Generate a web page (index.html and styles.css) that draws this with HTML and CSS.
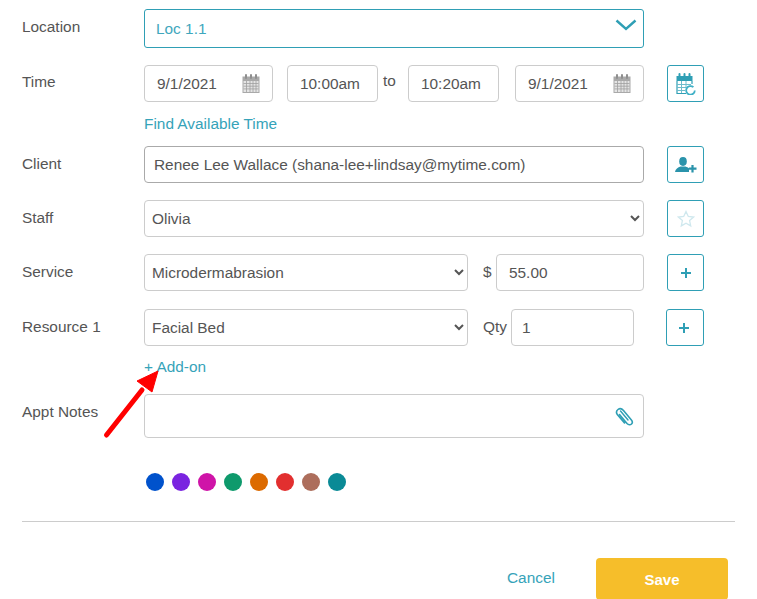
FILE: index.html
```html
<!DOCTYPE html>
<html lang="en">
<head>
<meta charset="utf-8">
<title>Appointment</title>
<link rel="stylesheet" href="styles.css">
</head>
<body>
<form class="form">
  <div class="row row-location">
    <label class="label">Location</label>
    <div class="location-box">
      <span>Loc 1.1</span>
      <svg class="loc-chevron" width="22" height="12" viewBox="0 0 22 12"><path d="M1.500 1.500 11 10l9.500-8.500" fill="none" stroke="#2f9fb5" stroke-width="2.400"/></svg>
    </div>
  </div>

  <div class="row row-time">
    <label class="label label-time">Time</label>
    <div class="field date">
      <span>9/1/2021</span>
      <svg class="cal" width="18" height="21" viewBox="0 0 18 20"><use href="#cal-grey"/></svg>
    </div>
    <div class="field time">10:00am</div>
    <span class="to">to</span>
    <div class="field time">10:20am</div>
    <div class="field date date-end">
      <span>9/1/2021</span>
      <svg class="cal" width="18" height="21" viewBox="0 0 18 20"><use href="#cal-grey"/></svg>
    </div>
    <button type="button" class="icon-btn btn-side">
      <svg width="20" height="22" viewBox="0 0 20 22">
        <path d="M.5 3h16v5H.5z" fill="#2f9fb5"/>
        <path d="M1 8v12.500h9M16 8v3" fill="none" stroke="#2f9fb5" stroke-width="1.200"/>
        <path d="M1 11.500h14M1 14.500h9M1 17.500h8M5.500 8v12M10 8v7" stroke="#6dbccc" stroke-width="1"/>
        <path d="M3.500 1v3.500M8.500 1v3.500M13.500 1v3.500" stroke="#2f9fb5" stroke-width="2" stroke-linecap="round"/>
        <path d="M18.800 17.500a4.300 4.300 0 1 1-1.400-3.300" fill="none" stroke="#3fb0c6" stroke-width="1.800"/>
      </svg>
    </button>
  </div>

  <div class="row-link link-find"><a class="link">Find Available Time</a></div>

  <div class="row row-client">
    <label class="label">Client</label>
    <div class="field client">Renee Lee Wallace (shana-lee+lindsay@mytime.com)</div>
    <button type="button" class="icon-btn btn-side">
      <svg width="22" height="16" viewBox="0 0 22 16">
        <ellipse cx="8" cy="4.500" rx="3.800" ry="4.400" fill="#2a93ab"/>
        <path d="M0 15c.3-3 3-4.500 5.500-5.500h5c1.500.5 2.500 1 3.500 1.800V15z" fill="#2a93ab"/>
        <path d="M17.500 8v7.500M14 11.700h7.500" stroke="#2a93ab" stroke-width="2.200"/>
      </svg>
    </button>
  </div>

  <div class="row row-staff">
    <label class="label">Staff</label>
    <select class="select select-wide"><option>Olivia</option></select>
    <button type="button" class="icon-btn btn-side">
      <svg width="18" height="18" viewBox="0 0 18 18"><path d="M9 1.500 11.300 6.500l5.200.6-3.900 3.500 1.100 5.300L9 13.200l-4.700 2.700 1.100-5.300L1.500 7.100l5.200-.6z" fill="#fff" stroke="#cfe8ee" stroke-width="1.300"/></svg>
    </button>
  </div>

  <div class="row row-service">
    <label class="label">Service</label>
    <select class="select select-half"><option>Microdermabrasion</option></select>
    <span class="unit unit-dollar">$</span>
    <div class="field price">55.00</div>
    <button type="button" class="icon-btn btn-side plus">
      <svg width="12" height="12" viewBox="0 0 12 12"><path d="M6 1v10M1 6h10" stroke="#2f9fb5" stroke-width="2"/></svg>
    </button>
  </div>

  <div class="row row-resource">
    <label class="label">Resource 1</label>
    <select class="select select-half"><option>Facial Bed</option></select>
    <span class="unit unit-qty">Qty</span>
    <div class="field qty">1</div>
    <button type="button" class="icon-btn btn-res plus">
      <svg width="12" height="12" viewBox="0 0 12 12"><path d="M6 1v10M1 6h10" stroke="#2f9fb5" stroke-width="2"/></svg>
    </button>
  </div>

  <div class="row-link link-addon"><a class="link">+ Add-on</a></div>

  <div class="row row-notes">
    <label class="label">Appt Notes</label>
    <div class="field notes">
      <svg width="20" height="21" viewBox="0 0 20 21"><path d="M5.500 7.500 13 16.500c1.500 1.700 3.500 1.500 4.500.5s1-2.800-.3-4.300L9.500 3.500C7.800 1.500 5.500 1.300 4 2.500S2 5.800 3.500 7.800l7 8.200" transform="translate(0 1)" fill="none" stroke="#2f9fb5" stroke-width="1.600" stroke-linecap="round"/><path d="M6.500 5l7.500 9" fill="none" stroke="#2f9fb5" stroke-width="1.400" stroke-linecap="round"/></svg>
    </div>
  </div>

  <div class="colors">
    <span class="dot c1"></span><span class="dot c2"></span><span class="dot c3"></span><span class="dot c4"></span><span class="dot c5"></span><span class="dot c6"></span><span class="dot c7"></span><span class="dot c8"></span>
  </div>

  <hr class="divider">

  <div class="actions">
    <a class="link cancel">Cancel</a>
    <button type="button" class="save">Save</button>
  </div>
</form>

<svg class="arrow" width="80" height="90" viewBox="0 0 80 90">
  <path d="M6.500 75 42 30" stroke="#ff0000" stroke-width="5" stroke-linecap="round" fill="none"/>
  <path d="M58 11 37 21 52 32z" fill="#ff0000" stroke="#ff0000" stroke-width="1" stroke-linejoin="round"/>
</svg>

<svg class="defs" width="0" height="0">
  <symbol id="cal-grey" viewBox="0 0 18 20">
    <path d="M.5 3h17v16.500H.5z" fill="#a9a9a9"/>
    <path d="M1.500 7.500h15v11h-15z" fill="#e4e4e4"/>
    <path d="M1.500 10h15M1.500 12.700h15M1.500 15.400h15M4.500 7.500v11M8 7.500v11M11 7.500v11M14 7.500v11" stroke="#a0a0a0" stroke-width=".8"/>
    <path d="M4 1.500v3M9 1.500v3M14 1.500v3" stroke="#8f8f8f" stroke-width="2" stroke-linecap="round"/>
  </symbol>
</svg>
</body>
</html>
```
FILE: styles.css
```css
* { box-sizing: border-box; }
html, body { height: 599px; overflow: hidden; }
body {
  margin: 0;
  position: relative;
  background: #fff;
  color: #555;
  font-family: "Liberation Sans", Arial, sans-serif;
  font-size: 15.400px;
}
.form { padding: 9px 22px 0; width: 735px; }
.row { display: flex; align-items: flex-start; position: relative; }
.label { width: 122px; flex: none; padding-top: 9px; color: #555; }
.label-time { padding-top: 8px; }
.row-time { margin-top: 17px; }
.row-client { margin-top: 13px; }
.row-staff { margin-top: 17px; }
.row-service { margin-top: 17px; }
.row-resource { margin-top: 18px; }
.row-notes { margin-top: 18px; }
.location-box {
  width: 500px; height: 39px;
  border: 1px solid #2f9fb5; border-radius: 3px;
  display: flex; align-items: center; justify-content: space-between;
  padding: 0 6px 0 11px;
  color: #3fa7bd;
}
.loc-chevron { margin-top: -8px; }
.field {
  height: 37px;
  border: 1px solid #ccc; border-radius: 4px;
  display: flex; align-items: center;
  color: #555; background: #fff;
  padding: 0 9px 0 12px;
  white-space: nowrap;
}
.date { width: 129px; justify-content: space-between; padding-right: 12px; }
.date-end { margin-left: 16px; }
.time { width: 91px; margin-left: 14px; }
.to { width: 30px; margin-right: -14px; padding-top: 7px; padding-left: 5px; flex: none; }
.client { width: 500px; border-color: #aaa; padding-left: 9px; }
.select {
  height: 37px;
  border: 1px solid #ccc; border-radius: 4px;
  background: #fff; color: #555;
  font: 15.400px "Liberation Sans", Arial, sans-serif;
  padding: 0 3px;
}
.select-wide { width: 500px; }
.select-half { width: 324px; }
.unit { flex: none; padding-top: 9px; }
.unit-dollar { width: 28px; padding-left: 15px; }
.price { width: 148px; padding-left: 12px; }
.unit-qty { width: 43px; padding-left: 15px; }
.qty { width: 123px; padding-left: 10px; }
.icon-btn {
  width: 37px; height: 37px; padding: 0;
  border: 1px solid #2f9fb5; border-radius: 3px;
  background: #fff;
  display: flex; align-items: center; justify-content: center;
  flex: none;
}
.btn-side { margin-left: 23px; }
.btn-res { width: 38px; margin-left: 32px; padding-right: 2px; }
.row-link { padding-left: 122px; line-height: 18px; }
.link { color: #36a3b9; }
.link-find { margin-top: 13px; }
.link-addon { margin-top: 12px; }
.notes { width: 500px; height: 44px; justify-content: flex-end; padding-right: 9px; }
.colors { display: flex; gap: 8px; margin-top: 35px; padding-left: 124px; }
.dot { width: 18px; height: 18px; border-radius: 50%; }
.c1 { background: #0052cc; }
.c2 { background: #7a24e0; }
.c3 { background: #cf14a8; }
.c4 { background: #0e9a6c; }
.c5 { background: #dc6a00; }
.c6 { background: #e22f2f; }
.c7 { background: #ad6e5c; }
.c8 { background: #0a8a96; }
.divider { border: 0; border-top: 1px solid #ccc; margin: 30px 0 0; width: 713px; }
.actions { display: flex; align-items: flex-start; margin-top: 36px; padding-left: 485px; width: 713px; }
.cancel { width: 89px; flex: none; padding-top: 11px; line-height: 17px; }
.save {
  width: 132px; height: 42px; flex: none;
  border: 0; border-radius: 4px;
  background: #f6be2a; color: #fff;
  font: bold 15px "Liberation Sans", Arial, sans-serif;
}
.arrow { position: absolute; left: 100px; top: 360px; }
.defs { position: absolute; }
```
